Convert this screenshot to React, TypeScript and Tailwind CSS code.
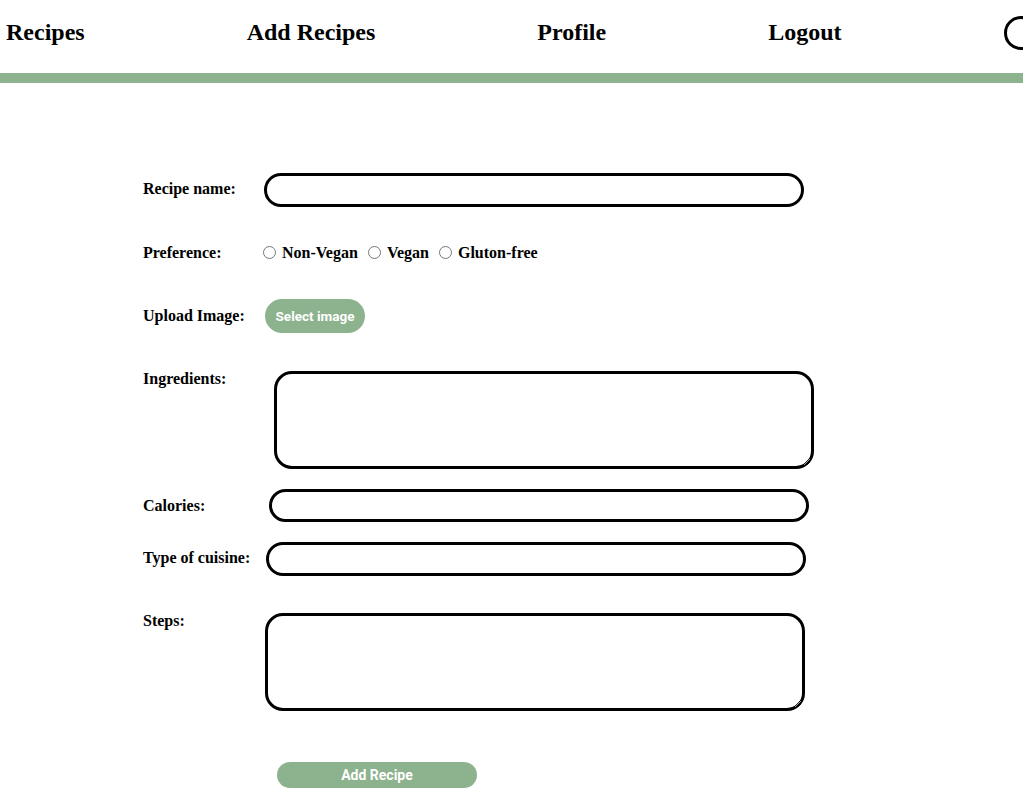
import { useState } from 'react'

const navLinks = ['Recipes', 'Add Recipes', 'Profile', 'Logout']
const preferences = ['Non-Vegan', 'Vegan', 'Gluton-free']

const serif = { fontFamily: '"Liberation Serif", "Times New Roman", serif' }

export default function App() {
  const [pref, setPref] = useState('')

  return (
    <div className="w-[1023px] min-h-[790px] overflow-hidden bg-white text-black" style={serif}>
      {/* Nav */}
      <nav className="flex items-center gap-[162px] pl-[6px] h-[73px] whitespace-nowrap">
        {navLinks.map((l) => (
          <a key={l} href="#" className="text-[24px] font-bold leading-none pb-[10px] shrink-0">
            {l}
          </a>
        ))}
        <div className="w-[34px] h-[34px] rounded-full border-[3px] border-black shrink-0 mb-[8px]" />
      </nav>
      <div className="h-[10px] bg-[#8db28e]" />

      {/* Form */}
      <form className="flex flex-col text-[16px] font-bold" onSubmit={(e) => e.preventDefault()}>
        <div className="flex items-center mt-[90px] pl-[143px]">
          <label className="w-[121px] pb-[2px]">Recipe name:</label>
          <input className="w-[540px] h-[34px] rounded-full border-[3px] border-black px-3 outline-none" />
        </div>

        <div className="flex items-center mt-[36px] pl-[143px] h-[20px]">
          <span className="w-[118px]">Preference:</span>
          {preferences.map((p) => (
            <label key={p} className="flex items-center mr-[8px]">
              <input
                type="radio"
                name="pref"
                checked={pref === p}
                onChange={() => setPref(p)}
                className="w-[13px] h-[13px] ml-[2px] mr-[6px] mt-[-2px] accent-[#8db28e]"
              />
              {p}
            </label>
          ))}
        </div>

        <div className="flex items-center mt-[36px] pl-[143px]">
          <span className="w-[122px]">Upload Image:</span>
          <button
            type="button"
            className="w-[100px] h-[34px] rounded-full bg-[#8db28e] text-white text-[13.5px] font-bold"
            style={{ fontFamily: 'Roboto, Arial, sans-serif' }}
          >
            Select image
          </button>
        </div>

        <div className="flex items-start mt-[38px] pl-[143px]">
          <label className="w-[131px] leading-[16px]">Ingredients:</label>
          <textarea className="w-[540px] h-[98px] rounded-[18px] border-[3px] border-black px-3 py-2 outline-none" />
        </div>

        <div className="flex items-center mt-[20px] pl-[143px]">
          <label className="w-[126px]">Calories:</label>
          <input className="w-[540px] h-[33px] rounded-full border-[3px] border-black px-3 outline-none" />
        </div>

        <div className="flex items-center mt-[20px] pl-[143px]">
          <label className="w-[123px] pb-[2px]">Type of cuisine:</label>
          <input className="w-[540px] h-[34px] rounded-full border-[3px] border-black px-3 outline-none" />
        </div>

        <div className="flex items-start mt-[37px] pl-[143px]">
          <label className="w-[122px] leading-[16px]">Steps:</label>
          <textarea className="w-[540px] h-[98px] rounded-[18px] border-[3px] border-black px-3 py-2 outline-none" />
        </div>

        <div className="mt-[51px] pl-[277px] pb-[4px]">
          <button
            type="submit"
            className="w-[200px] h-[26px] rounded-full bg-[#8db28e] text-white text-[14px] font-bold"
            style={{ fontFamily: 'Roboto, Arial, sans-serif' }}
          >
            Add Recipe
          </button>
        </div>
      </form>
    </div>
  )
}
